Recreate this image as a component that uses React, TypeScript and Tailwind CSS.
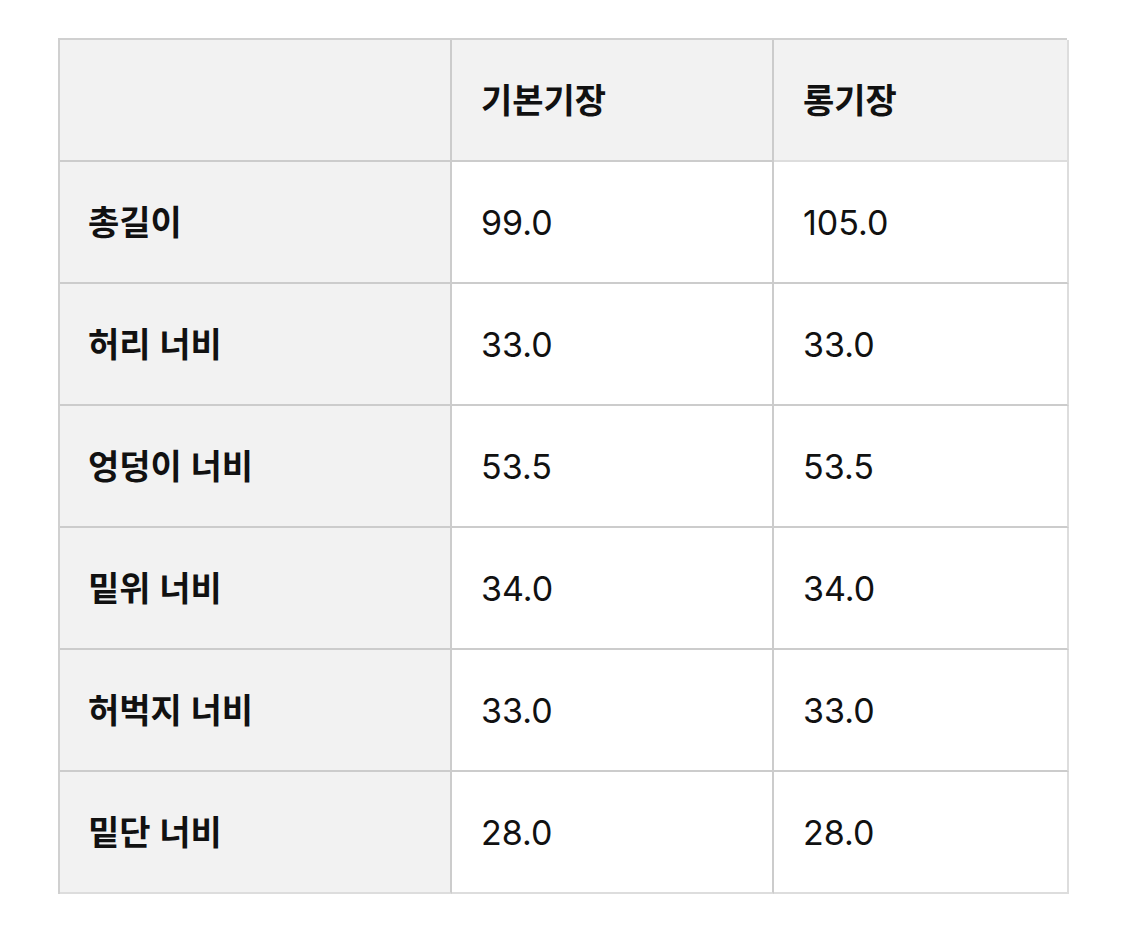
const rows: [string, string, string][] = [
  ["총길이", "99.0", "105.0"],
  ["허리 너비", "33.0", "33.0"],
  ["엉덩이 너비", "53.5", "53.5"],
  ["밑위 너비", "34.0", "34.0"],
  ["허벅지 너비", "33.0", "33.0"],
  ["밑단 너비", "28.0", "28.0"],
];

const font = { fontFamily: '"Inter", "Noto Sans CJK KR", sans-serif' };

export default function App() {
  return (
    <div className="min-h-screen bg-white pl-[58px] pt-[38px] text-[#111]" style={font}>
      <div className="grid w-[1009px] grid-cols-[392px_322px_295px] border-l-2 border-t-2 border-[#d0d0d0] text-[34px]">
        <div className="h-[122px] border-b-2 border-r-2 border-[#cccccc] bg-[#f2f2f2]" />
        <div className="flex h-[122px] items-center border-b-2 border-r-2 border-[#cccccc] bg-[#f2f2f2] pl-[29px] font-semibold">
          기본기장
        </div>
        <div className="flex h-[122px] items-center border-b-2 border-r-2 border-[#dddddd] bg-[#f2f2f2] pl-[29px] font-semibold">
          롱기장
        </div>
        {rows.map(([label, a, b], i) => {
          const last = i === rows.length - 1;
          return (
            <div key={label} className="contents">
              <div
                className={`flex h-[122px] items-center border-b-2 border-r-2 border-r-[#cccccc] bg-[#f2f2f2] pl-[28px] font-semibold ${
                  last ? "border-b-[#dddddd]" : "border-b-[#cccccc]"
                }`}
              >
                {label}
              </div>
              <div
                className={`flex h-[122px] items-center border-b-2 border-r-2 border-r-[#cccccc] bg-white pl-[29px] ${
                  last ? "border-b-[#dddddd]" : "border-b-[#cccccc]"
                }`}
              >
                {a}
              </div>
              <div
                className={`flex h-[122px] items-center border-b-2 border-r-2 border-r-[#dddddd] bg-white pl-[29px] ${
                  last ? "border-b-[#dddddd]" : "border-b-[#cccccc]"
                }`}
              >
                {b}
              </div>
            </div>
          );
        })}
      </div>
    </div>
  );
}
